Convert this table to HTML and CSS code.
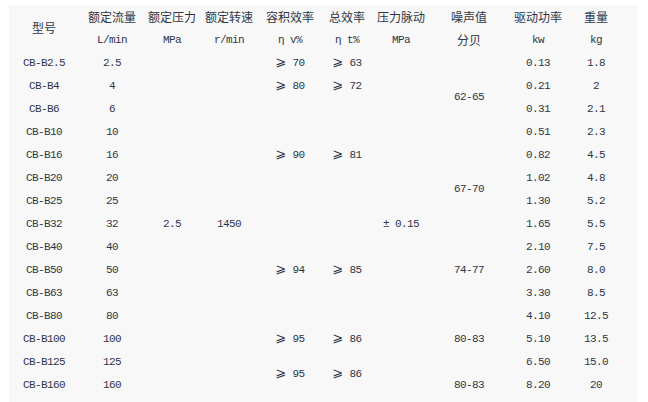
FILE: index.html
```html
<!DOCTYPE html>
<html lang="zh-CN">
<head>
<meta charset="utf-8">
<title>CB-B 齿轮泵参数</title>
<link rel="stylesheet" href="styles.css">
</head>
<body>
<div class="panel">
<table class="spec">
<colgroup>
<col class="c1"><col class="c2"><col class="c3"><col class="c4"><col class="c5"><col class="c6"><col class="c7"><col class="c8"><col class="c9"><col class="c10">
</colgroup>
<thead>
<tr>
<th rowspan="2" class="cjk">型号</th>
<th class="cjk">额定流量</th>
<th class="cjk">额定压力</th>
<th class="cjk">额定转速</th>
<th class="cjk">容积效率</th>
<th class="cjk">总效率</th>
<th class="cjk">压力脉动</th>
<th class="cjk">噪声值</th>
<th class="cjk">驱动功率</th>
<th class="cjk">重量</th>
</tr>
<tr>
<th>L/min</th>
<th>MPa</th>
<th>r/min</th>
<th>η v%</th>
<th>η t%</th>
<th>MPa</th>
<th class="cjk">分贝</th>
<th>kw</th>
<th>kg</th>
</tr>
</thead>
<tbody>
<tr><td>CB-B2.5</td><td>2.5</td><td rowspan="15">2.5</td><td rowspan="15">1450</td><td><span class="ge">⩾</span> 70</td><td><span class="ge">⩾</span> 63</td><td rowspan="15">± 0.15</td><td rowspan="4">62-65</td><td>0.13</td><td>1.8</td></tr>
<tr><td>CB-B4</td><td>4</td><td><span class="ge">⩾</span> 80</td><td><span class="ge">⩾</span> 72</td><td>0.21</td><td>2</td></tr>
<tr><td>CB-B6</td><td>6</td><td rowspan="5"><span class="ge">⩾</span> 90</td><td rowspan="5"><span class="ge">⩾</span> 81</td><td>0.31</td><td>2.1</td></tr>
<tr><td>CB-B10</td><td>10</td><td>0.51</td><td>2.3</td></tr>
<tr><td>CB-B16</td><td>16</td><td rowspan="4">67-70</td><td>0.82</td><td>4.5</td></tr>
<tr><td>CB-B20</td><td>20</td><td>1.02</td><td>4.8</td></tr>
<tr><td>CB-B25</td><td>25</td><td>1.30</td><td>5.2</td></tr>
<tr><td>CB-B32</td><td>32</td><td rowspan="5"><span class="ge">⩾</span> 94</td><td rowspan="5"><span class="ge">⩾</span> 85</td><td>1.65</td><td>5.5</td></tr>
<tr><td>CB-B40</td><td>40</td><td rowspan="3">74-77</td><td>2.10</td><td>7.5</td></tr>
<tr><td>CB-B50</td><td>50</td><td>2.60</td><td>8.0</td></tr>
<tr><td>CB-B63</td><td>63</td><td>3.30</td><td>8.5</td></tr>
<tr><td>CB-B80</td><td>80</td><td rowspan="3">80-83</td><td>4.10</td><td>12.5</td></tr>
<tr><td>CB-B100</td><td>100</td><td><span class="ge">⩾</span> 95</td><td><span class="ge">⩾</span> 86</td><td>5.10</td><td>13.5</td></tr>
<tr><td>CB-B125</td><td>125</td><td rowspan="2"><span class="ge">⩾</span> 95</td><td rowspan="2"><span class="ge">⩾</span> 86</td><td>6.50</td><td>15.0</td></tr>
<tr><td>CB-B160</td><td>160</td><td>80-83</td><td>8.20</td><td>20</td></tr>
</tbody>
</table>
</div>
</body>
</html>
```

FILE: styles.css
```css
html, body {
  margin: 0;
  padding: 0;
  background: #ffffff;
}

.panel {
  margin: 5px 0 0 9px;
  width: 629px;
  min-height: 400px;
  background: #f8f8f8;
}

.spec {
  border-collapse: collapse;
  border-spacing: 0;
  table-layout: fixed;
  width: 616px;
  color: #2f3646;
  font-family: "Liberation Mono", "Noto Sans CJK SC", monospace;
  font-size: 11px;
  letter-spacing: -0.6px;
}

.c1 { width: 70px; }
.c2 { width: 66px; }
.c3 { width: 54px; }
.c4 { width: 60px; }
.c5 { width: 62px; }
.c6 { width: 52px; }
.c7 { width: 56px; }
.c8 { width: 80px; }
.c9 { width: 58px; }
.c10 { width: 58px; }

.spec th,
.spec td {
  height: 23px;
  padding: 0;
  text-align: center;
  vertical-align: middle;
  font-weight: normal;
  white-space: nowrap;
  line-height: 12px;
}

.spec .cjk {
  font-family: "Noto Sans CJK SC", sans-serif;
  font-size: 12px;
  letter-spacing: 0;
}

.ge {
  font-family: "DejaVu Sans", "Noto Sans CJK SC", sans-serif;
  font-size: 13px;
  letter-spacing: 0;
}
```
